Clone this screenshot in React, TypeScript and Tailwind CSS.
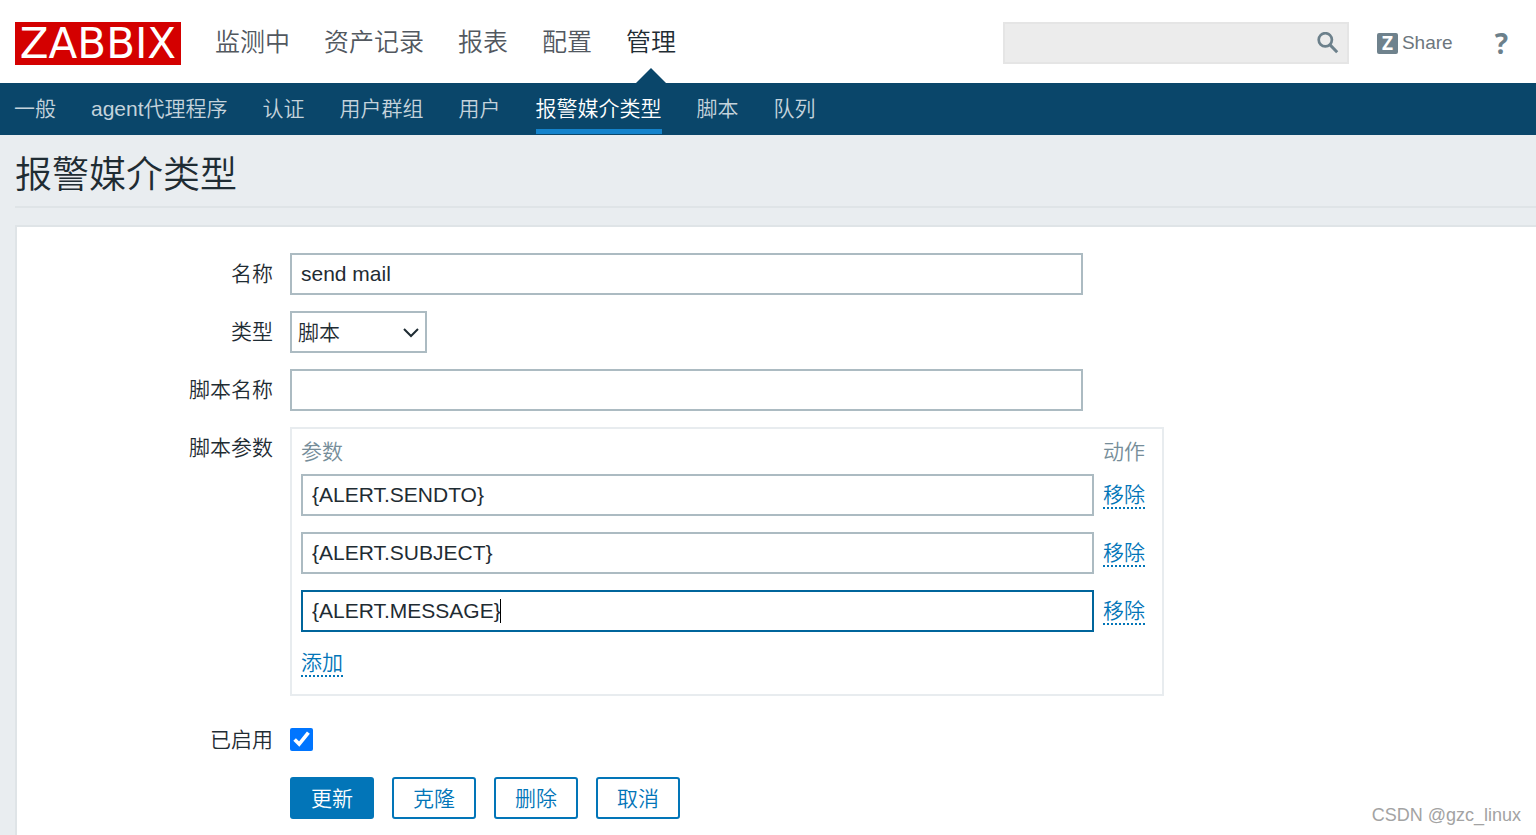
import { useState } from "react";

const mainMenu = ["监测中", "资产记录", "报表", "配置", "管理"];
const activeMain = "管理";

const subMenu = ["一般", "agent代理程序", "认证", "用户群组", "用户", "报警媒介类型", "脚本", "队列"];
const activeSub = "报警媒介类型";

const fieldClass =
  "block h-[42px] w-full border-2 border-[#acbbc2] bg-white px-[9px] text-[21px] text-[#1f2c33] outline-none focus:border-[#00659c]";

function Header() {
  return (
    <header className="flex h-[83px] items-center bg-white pt-[3px] pr-7 pl-[15px]">
      <a
        href="#home"
        className="flex h-[43px] w-[166px] shrink-0 items-center justify-center bg-[#d40000] font-['DejaVu_Sans'] text-[42px] leading-[43px] font-normal text-white"
      >
        ZABBIX
      </a>
      <nav aria-label="主菜单" className="ml-[34px] flex h-full gap-[34px] text-[25px] whitespace-nowrap">
        {mainMenu.map((item) => (
          <a
            key={item}
            href={`#${item}`}
            className={
              item === activeMain
                ? "relative flex items-center text-[#1f2c33]"
                : "flex items-center text-[#52585f]"
            }
          >
            {item}
            {item === activeMain && (
              <svg
                className="absolute bottom-0 left-1/2 -translate-x-1/2"
                width="30"
                height="15"
                viewBox="0 0 30 15"
                aria-hidden="true"
              >
                <path d="M0 15 15 0l15 15z" fill="#0a466a" />
              </svg>
            )}
          </a>
        ))}
      </nav>
      <form
        role="search"
        className="ml-auto flex h-[42px] w-[346px] items-center border-2 border-[#e5e5e5] bg-[#ececec] pr-2"
        onSubmit={(event) => event.preventDefault()}
      >
        <input type="text" aria-label="搜索" className="h-full min-w-0 flex-1 bg-transparent px-2 text-[21px] outline-none" />
        <button type="submit" aria-label="搜索">
          <svg width="22" height="22" viewBox="0 0 22 22" fill="none" stroke="#6c808b" aria-hidden="true">
            <circle cx="8.3" cy="7.8" r="6.6" strokeWidth="2.7" />
            <path d="m12.8 12.6 7.4 7.6" strokeWidth="3" />
          </svg>
        </button>
      </form>
      <a href="#share" className="ml-7 flex items-center gap-1 text-[19px] text-[#6c767d]">
        <span className="flex h-[21px] w-[21px] items-center justify-center rounded-xs bg-[#6f828d] font-['Open_Sans'] text-[19px] leading-[21px] font-bold text-white">
          Z
        </span>
        Share
      </a>
      <a
        href="#help"
        className="ml-[42px] font-['Open_Sans'] text-[28px] leading-[42px] font-bold text-[#6c808b]"
      >
        ?
      </a>
    </header>
  );
}

function SubMenu() {
  return (
    <nav
      aria-label="子菜单"
      className="flex h-[52px] gap-[35px] bg-[#0a466a] px-[14px] pb-px text-[21px] whitespace-nowrap"
    >
      {subMenu.map((item) => (
        <a
          key={item}
          href={`#${item}`}
          className={
            item === activeSub
              ? "flex items-center border-b-[5px] border-[#1483cc] pt-[5px] text-white"
              : "flex items-center text-[#c4d3dc]"
          }
        >
          {item}
        </a>
      ))}
    </nav>
  );
}

function DottedButton({ children }: { children: string }) {
  return (
    <button
      type="button"
      className="block border-b-2 border-dotted border-[#0275b8] pt-px leading-[25px] whitespace-nowrap text-[#0275b8]"
    >
      {children}
    </button>
  );
}

function Parameters() {
  const [params, setParams] = useState(["{ALERT.SENDTO}", "{ALERT.SUBJECT}", "{ALERT.MESSAGE}"]);
  const last = params.length - 1;

  return (
    <div className="w-full max-w-[874px] border-2 border-[#e8ecef] pr-[17px] pl-[9px]">
      <table className="w-full border-collapse">
        <thead>
          <tr className="h-[45px] text-left text-[#768d99]">
            <th className="p-0 font-[350]">参数</th>
            <th className="w-[51px] p-0 pl-[9px] font-[350] whitespace-nowrap">动作</th>
          </tr>
        </thead>
        <tbody>
          {params.map((value, index) => (
            <tr key={index}>
              <td className="p-0 pb-4">
                <div className="relative">
                  <input
                    type="text"
                    aria-label={`参数 ${index + 1}`}
                    value={value}
                    autoFocus={index === last}
                    onChange={(event) =>
                      setParams(params.map((param, i) => (i === index ? event.target.value : param)))
                    }
                    className={`${fieldClass} caret-transparent`}
                  />
                  {index === last && (
                    <span
                      aria-hidden="true"
                      className="pointer-events-none absolute top-[9px] left-[10px] h-6 border-r border-black leading-6 text-transparent"
                    >
                      {value}
                    </span>
                  )}
                </div>
              </td>
              <td className="p-0 pb-4 pl-[9px]">
                <DottedButton>移除</DottedButton>
              </td>
            </tr>
          ))}
          <tr className="h-[46px] align-top">
            <td colSpan={2} className="p-0 pt-px">
              <DottedButton>添加</DottedButton>
            </td>
          </tr>
        </tbody>
      </table>
    </div>
  );
}

function MediaTypeForm() {
  const labelClass = "text-right leading-[42px]";
  const secondary = "h-[42px] w-[84px] rounded-[3px] border-2 border-[#0275b8] bg-white pt-px text-[#0275b8]";

  return (
    <form
      className="grid grid-cols-[256px_minmax(0,1fr)] gap-x-[17px] gap-y-4"
      onSubmit={(event) => event.preventDefault()}
    >
      <label htmlFor="name" className={labelClass}>
        名称
      </label>
      <div className="max-w-[793px]">
        <input id="name" type="text" defaultValue="send mail" className={fieldClass} />
      </div>

      <label htmlFor="type" className={labelClass}>
        类型
      </label>
      <div className="relative w-[137px]">
        <select
          id="type"
          className="block h-[42px] w-full appearance-none border-2 border-[#acbbc2] bg-white pt-[2px] pl-[6px] outline-none"
        >
          <option>脚本</option>
        </select>
        <svg
          className="pointer-events-none absolute top-[17px] right-[8px]"
          width="16"
          height="10"
          viewBox="0 0 16 10"
          fill="none"
          stroke="#1f2c33"
          strokeWidth="2"
          aria-hidden="true"
        >
          <path d="m1 1 7 7 7-7" />
        </svg>
      </div>

      <label htmlFor="script" className={labelClass}>
        脚本名称
      </label>
      <div className="max-w-[793px]">
        <input id="script" type="text" className={fieldClass} />
      </div>

      <span className={labelClass}>脚本参数</span>
      <Parameters />

      <label htmlFor="enabled" className="mt-[7px] text-right leading-[42px]">
        已启用
      </label>
      <div className="mt-[7px] flex h-[42px] items-center pb-px">
        <input id="enabled" type="checkbox" defaultChecked className="h-[23px] w-[23px] accent-[#0075ff]" />
      </div>

      <div className="col-start-2 flex gap-[18px]">
        <button type="submit" className="h-[42px] w-[84px] rounded-[3px] bg-[#0275b8] pt-px text-white">
          更新
        </button>
        <button type="button" className={secondary}>
          克隆
        </button>
        <button type="button" className={secondary}>
          删除
        </button>
        <button type="button" className={secondary}>
          取消
        </button>
      </div>
    </form>
  );
}

export default function App() {
  return (
    <div className="relative flex min-h-screen flex-col bg-[#e9edf0] font-['Liberation_Sans','Noto_Sans_CJK_SC',sans-serif] text-[21px] font-[350] text-[#1f2c33]">
      <Header />
      <SubMenu />
      <main className="flex flex-1 flex-col pl-[15px]">
        <h1 className="border-b-2 border-[#dfe4e7] pt-[13px] pb-[2px] text-[37px] leading-[56px] font-[350]">
          报警媒介类型
        </h1>
        <section className="mt-[17px] flex-1 border-t-2 border-l-2 border-[#dfe4e7] bg-white pt-[26px] pb-4">
          <MediaTypeForm />
        </section>
      </main>
      <div className="absolute right-[15px] bottom-2 text-[18px] leading-6 text-[#a3a3a3]">CSDN @gzc_linux</div>
    </div>
  );
}
